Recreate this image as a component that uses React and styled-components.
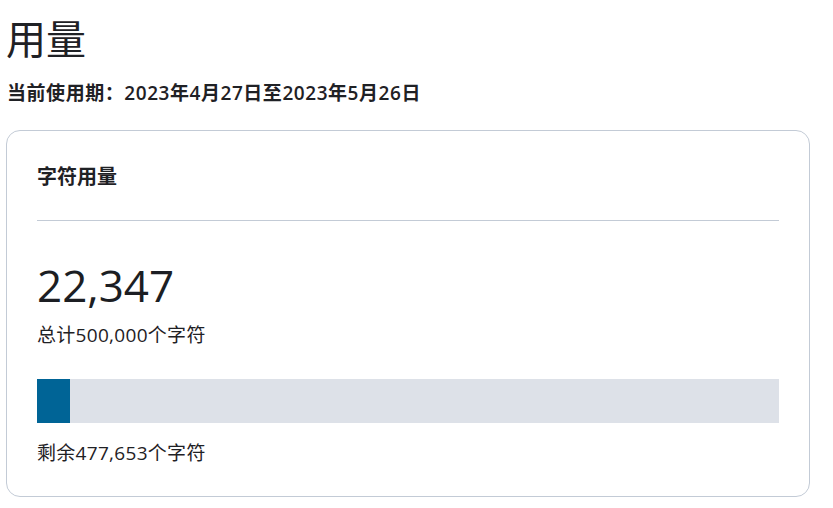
import React from "react";
import styled, { createGlobalStyle } from "styled-components";

const Global = createGlobalStyle`
  html, body { margin: 0; padding: 0; background: #fff; }
  body { font-family: "Open Sans", "Noto Sans CJK SC", sans-serif; color: #1f2125; }
`;

const Page = styled.div`
  padding: 11px 23px 0 6px;
`;

const Title = styled.h1`
  margin: 0;
  font-size: 40px;
  font-weight: 400;
  line-height: 56px;
`;

const Period = styled.div`
  margin: 14px 0 0 1px;
  font-size: 19px;
  font-weight: 600;
  line-height: 24px;
  letter-spacing: 0.55px;
`;

const Card = styled.section`
  margin-top: 25px;
  border: 1px solid #c3cbd6;
  border-radius: 14px;
  padding: 30px 30px 30px 30px;
  box-sizing: border-box;
`;

const CardTitle = styled.h2`
  margin: 0;
  font-size: 20px;
  font-weight: 700;
  line-height: 32px;
  padding-bottom: 27px;
  border-bottom: 1px solid #c3cbd6;
`;

const BigNumber = styled.div`
  margin-top: 36px;
  font-size: 44px;
  line-height: 56px;
  font-weight: 500;
  color: #1c1e23;
`;

const Sub = styled.div`
  font-size: 19px;
  line-height: 26px;
  letter-spacing: 0.3px;
  margin-top: ${p => p.$top || 0}px;
`;

const Track = styled.div`
  margin-top: 31px;
  height: 44px;
  background: #dde1e8;
`;

const Fill = styled.div`
  height: 100%;
  background: #006496;
`;

export default function App() {
  const used = 22347;
  const total = 500000;
  return (
    <Page>
      <Global />
      <Title>用量</Title>
      <Period>当前使用期：2023年4月27日至2023年5月26日</Period>
      <Card>
        <CardTitle>字符用量</CardTitle>
        <BigNumber>22,347</BigNumber>
        <Sub $top={9}>总计500,000个字符</Sub>
        <Track>
          <Fill style={{ width: `${(used / total) * 100}%` }} />
        </Track>
        <Sub $top={17}>剩余477,653个字符</Sub>
      </Card>
    </Page>
  );
}
